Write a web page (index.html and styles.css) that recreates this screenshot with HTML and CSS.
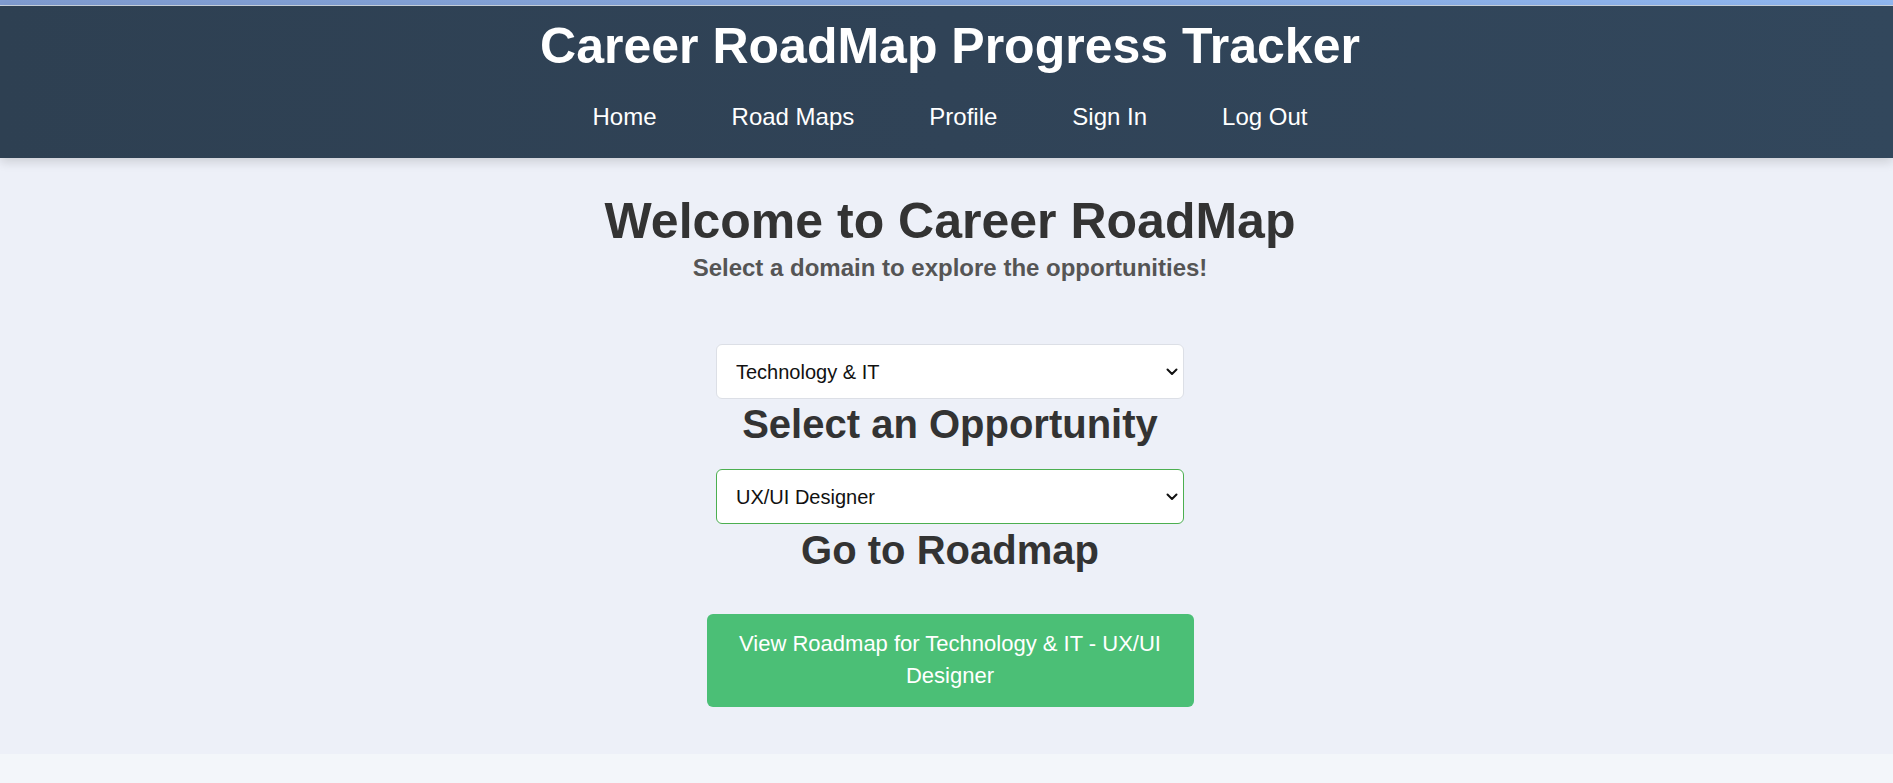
FILE: index.html
```html
<!DOCTYPE html>
<html lang="en">
<head>
<meta charset="utf-8">
<title>Career RoadMap Progress Tracker</title>
<link rel="stylesheet" href="styles.css">
</head>
<body>
<div class="top-strip"></div>
<header class="site-header">
  <h1 class="site-title">Career RoadMap Progress Tracker</h1>
  <nav class="site-nav">
    <a href="#">Home</a>
    <a href="#">Road Maps</a>
    <a href="#">Profile</a>
    <a href="#">Sign In</a>
    <a href="#">Log Out</a>
  </nav>
</header>
<main class="content">
  <h1 class="welcome">Welcome to Career RoadMap</h1>
  <p class="subtitle">Select a domain to explore the opportunities!</p>
  <div class="select-wrap first">
    <select class="dropdown">
      <option>Technology &amp; IT</option>
    </select>
    <svg class="chevron" width="12" height="8" viewBox="0 0 12 8"><path d="M1.5 1.5 L6 6 L10.5 1.5" fill="none" stroke="#111" stroke-width="2" stroke-linecap="round" stroke-linejoin="round"/></svg>
  </div>
  <h2 class="section-title">Select an Opportunity</h2>
  <div class="select-wrap second">
    <select class="dropdown active">
      <option>UX/UI Designer</option>
    </select>
    <svg class="chevron" width="12" height="8" viewBox="0 0 12 8"><path d="M1.5 1.5 L6 6 L10.5 1.5" fill="none" stroke="#111" stroke-width="2" stroke-linecap="round" stroke-linejoin="round"/></svg>
  </div>
  <h2 class="section-title go">Go to Roadmap</h2>
  <button class="cta">View Roadmap for Technology &amp; IT - UX/UI Designer</button>
</main>
</body>
</html>
```
FILE: styles.css
```css
html, body {
  margin: 0;
  padding: 0;
}
body {
  background: #f3f6fa;
  font-family: "Liberation Sans", Arial, sans-serif;
  color: #333;
}
.top-strip {
  height: 5px;
  background: linear-gradient(90deg, #7f9bcf 0%, #86a7dc 50%, #90b7f0 100%);
  border-bottom: 1px solid #c9d3df;
}
.site-header {
  background: linear-gradient(90deg, #2e4052 0%, #304357 50%, #32475c 100%);
  padding: 12px 0 27px 7px;
  text-align: center;
  box-shadow: 0 4px 10px rgba(0, 0, 0, 0.14);
  position: relative;
  z-index: 1;
}
.site-title {
  margin: 0;
  font-size: 50px;
  line-height: 57px;
  font-weight: bold;
  color: #fff;
}
.site-nav {
  margin-top: 28px;
  display: flex;
  justify-content: center;
  gap: 75px;
  line-height: 28px;
}
.site-nav a {
  color: #fff;
  text-decoration: none;
  font-size: 24px;
}
.content {
  background: #edf0f8;
  display: flex;
  flex-direction: column;
  align-items: center;
  padding: 35px 0 47px 7px;
}
.welcome {
  margin: 0;
  font-size: 50px;
  line-height: 57px;
  font-weight: bold;
  color: #333;
}
.subtitle {
  margin: 4px 0 0;
  font-size: 24px;
  line-height: 28px;
  font-weight: bold;
  color: #555;
}
.select-wrap {
  position: relative;
  width: 468px;
}
.select-wrap.first {
  margin-top: 62px;
}
.select-wrap.second {
  margin-top: 22px;
}
.select-wrap select.dropdown {
  appearance: none;
  -webkit-appearance: none;
  display: block;
  width: 100%;
  height: 55px;
  box-sizing: border-box;
  padding: 0 40px 0 19px;
  border: 1px solid #dcdfe6;
  border-radius: 6px;
  background: #fff;
  font-family: "Liberation Sans", sans-serif !important;
  font-size: 20px !important;
  color: #111;
}
.select-wrap select.dropdown.active {
  border-color: #4caf50;
}
.chevron {
  position: absolute;
  right: 6px;
  top: 24px;
  pointer-events: none;
}
.section-title {
  margin: 2px 0 0;
  font-size: 40px;
  line-height: 46px;
  font-weight: bold;
  color: #333;
}
.section-title.go {
  margin-top: 3px;
}
.cta {
  margin-top: 41px;
  width: 487px;
  box-sizing: border-box;
  padding: 14px 24px 15px;
  border: none;
  border-radius: 6px;
  background: #4bbf76;
  color: #fff;
  font-family: "Liberation Sans", sans-serif;
  font-size: 22px;
  line-height: 32px;
  text-align: center;
  cursor: pointer;
}
```
